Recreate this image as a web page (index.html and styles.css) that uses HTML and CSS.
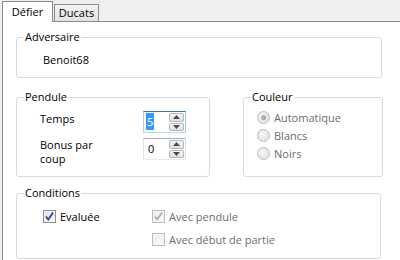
FILE: index.html
```html
<!DOCTYPE html>
<html lang="fr">
<head>
<meta charset="utf-8">
<title>Défier</title>
<link rel="stylesheet" href="styles.css">
</head>
<body>
<div class="tabs">
  <div class="tab active">Défier</div>
  <div class="tab">Ducats</div>
</div>
<div class="panel">
  <fieldset class="group adv">
    <legend>Adversaire</legend>
    <div class="adv-name">Benoit68</div>
  </fieldset>

  <div class="row">
    <fieldset class="group pendule">
      <legend>Pendule</legend>
      <div class="fields">
        <div class="field">
          <span class="lbl">Temps</span>
          <div class="spin focused">
            <span class="edit"><span class="sel">5</span></span>
            <span class="btns">
              <span class="btn"><svg width="7" height="4" viewBox="0 0 7 4"><polygon points="0,4 3.5,0 7,4" fill="#4a4a4a"/></svg></span>
              <span class="btn"><svg width="7" height="4" viewBox="0 0 7 4"><polygon points="0,0 7,0 3.5,4" fill="#4a4a4a"/></svg></span>
            </span>
          </div>
        </div>
        <div class="field">
          <span class="lbl two">Bonus par<br>coup</span>
          <div class="spin">
            <span class="edit">0</span>
            <span class="btns">
              <span class="btn"><svg width="7" height="4" viewBox="0 0 7 4"><polygon points="0,4 3.5,0 7,4" fill="#4a4a4a"/></svg></span>
              <span class="btn"><svg width="7" height="4" viewBox="0 0 7 4"><polygon points="0,0 7,0 3.5,4" fill="#4a4a4a"/></svg></span>
            </span>
          </div>
        </div>
      </div>
    </fieldset>

    <fieldset class="group couleur">
      <legend>Couleur</legend>
      <div class="radios">
        <div class="opt"><span class="radio checked"></span><span>Automatique</span></div>
        <div class="opt"><span class="radio"></span><span>Blancs</span></div>
        <div class="opt"><span class="radio"></span><span>Noirs</span></div>
      </div>
    </fieldset>
  </div>

  <fieldset class="group cond">
    <legend>Conditions</legend>
    <div class="checks">
      <div class="opt"><span class="cb"><svg width="11" height="11" viewBox="0 0 11 11"><path d="M2 5.5 L4.3 8.5 L9 1.5" fill="none" stroke="#2c4690" stroke-width="1.8"/></svg></span><span class="txt">Evaluée</span></div>
      <div class="opt disabled"><span class="cb"><svg width="11" height="11" viewBox="0 0 11 11"><path d="M2 5.5 L4.3 8.5 L9 1.5" fill="none" stroke="#a8a8a8" stroke-width="1.6"/></svg></span><span class="txt">Avec pendule</span></div>
      <div class="opt empty"></div>
      <div class="opt disabled"><span class="cb"></span><span class="txt">Avec début de partie</span></div>
    </div>
  </fieldset>
</div>
</body>
</html>
```

FILE: styles.css
```css
html, body {
  margin: 0;
  padding: 0;
}
body {
  width: 400px;
  height: 260px;
  overflow: hidden;
  background: #f0f0f0;
  font-family: "Open Sans", "Noto Sans", sans-serif;
  font-size: 11px;
  color: #000;
}

/* Tabs */
.tabs {
  display: flex;
  align-items: flex-end;
  height: 21px;
  padding-left: 2px;
  position: relative;
  z-index: 2;
}
.tab {
  box-sizing: border-box;
  height: 17px;
  width: 45px;
  margin-left: 1px;
  border: 1px solid #898c95;
  border-bottom: none;
  background: linear-gradient(#f3f3f3, #e3e3e3);
  text-align: center;
  line-height: 16px;
}
.tab.active {
  width: 51px;
  height: 21px;
  margin-left: 0;
  margin-bottom: -1px;
  background: #fff;
  line-height: 19px;
}

/* Panel */
.panel {
  box-sizing: border-box;
  height: 239px;
  margin-left: 2px;
  border-top: 1px solid #898c95;
  border-left: 1px solid #898c95;
  background: #fff;
  padding: 8px 0 0 13px;
  position: relative;
  z-index: 1;
}

.group {
  box-sizing: border-box;
  margin: 0;
  padding: 0;
  border: 1px solid #d8dadc;
  border-radius: 3px;
  min-width: 0;
}
.group legend {
  margin-left: 7px;
  padding: 0 1px;
  line-height: 14px;
}

.adv {
  width: 366px;
}
.adv-name {
  padding: 8px 0 10px 26px;
  line-height: 15px;
}

.row {
  display: flex;
  gap: 33px;
  margin-top: 12px;
}
.pendule {
  width: 194px;
  height: 87px;
}
.couleur {
  width: 140px;
  height: 87px;
}

/* Pendule fields */
.fields {
  display: flex;
  flex-direction: column;
  gap: 5px;
  padding: 7px 0 0 23px;
}
.field {
  display: flex;
  align-items: flex-start;
}
.lbl {
  width: 103px;
  line-height: 14px;
  padding-top: 1px;
}
.lbl.two {
  padding-top: 0;
}
.spin {
  box-sizing: border-box;
  display: flex;
  width: 43px;
  height: 22px;
  border: 1px solid;
  border-color: #abadb3 #dbdfe6 #e3e9ef #e2e3ea;
  background: #fff;
}
.spin.focused {
  border-color: #3d7bad #a4c9e3 #b7d9ed #b5cfe7;
}
.edit {
  flex: 1;
  padding: 1px 0 0 4px;
  line-height: 18px;
}
.sel {
  display: inline-block;
  background: #3399ff;
  color: #fff;
  padding: 0 1px;
  margin-left: -2px;
  line-height: 17px;
}
.btns {
  display: flex;
  flex-direction: column;
  gap: 1px;
  width: 15px;
  padding: 1px 1px 1px 0;
}
.btn {
  box-sizing: border-box;
  flex: 1;
  display: flex;
  align-items: center;
  justify-content: center;
  border: 1px solid #b4b4b4;
  border-radius: 2px;
  background: linear-gradient(#f7f7f7, #e0e0e0);
}

/* Radios */
.radios {
  display: flex;
  flex-direction: column;
  padding: 4px 0 0 13px;
  color: #6d6d6d;
}
.radios .opt {
  display: flex;
  align-items: center;
  gap: 4px;
  height: 18px;
}
.radio {
  box-sizing: border-box;
  width: 13px;
  height: 13px;
  border-radius: 50%;
  border: 1px solid #bcbcbc;
  background: radial-gradient(circle at 40% 40%, #f8f8f8, #dadada);
  display: flex;
  align-items: center;
  justify-content: center;
}
.radio.checked::after {
  content: "";
  width: 5px;
  height: 5px;
  border-radius: 50%;
  background: radial-gradient(circle at 40% 40%, #c4c4c4, #8a8a8a);
}

/* Conditions */
.cond {
  width: 365px;
  height: 73px;
  margin-top: 9px;
}
.checks {
  display: grid;
  grid-template-columns: 109px auto;
  grid-auto-rows: 18px;
  row-gap: 5px;
  padding: 7px 0 0 26px;
}
.checks .opt {
  display: flex;
  align-items: center;
  gap: 4px;
}
.cb {
  box-sizing: border-box;
  width: 13px;
  height: 13px;
  border: 1px solid #8e8f8f;
  background: linear-gradient(135deg, #dcdcdc, #fbfbfb);
  box-shadow: inset 0 0 0 1px #f4f4f4;
  display: flex;
  align-items: center;
  justify-content: center;
}
.disabled {
  color: #6d6d6d;
}
.disabled .cb {
  border-color: #bcbcbc;
  background: linear-gradient(135deg, #ececec, #fafafa);
}
```
